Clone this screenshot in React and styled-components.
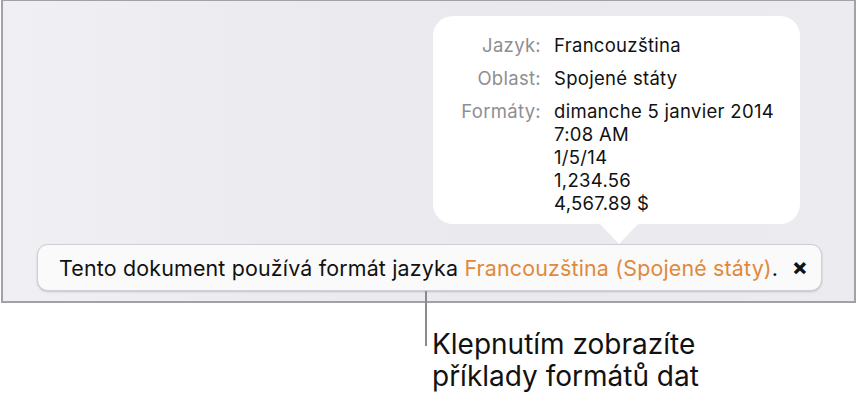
import styled, { createGlobalStyle } from 'styled-components';

const Global = createGlobalStyle`
    body {
        margin: 0;
        background: #ffffff;
        font-family: Inter, "Noto Sans", sans-serif;
        color: #1c1c1e;
    }
`;

const Frame = styled.div`
    margin-left: 1px;
    width: 851px;
    height: 300px;
    border: 2px solid #a2a2a6;
    border-top-width: 1px;
    background: linear-gradient(90deg, #f0f0f4 0%, #ebebf0 30%, #e9e9ee 60%, #ececf0 100%);
    display: flex;
    flex-direction: column;
`;

const Popover = styled.div`
    position: relative;
    margin: 15px 0 0 430px;
    width: 367px;
    height: 208px;
    box-sizing: border-box;
    background: #ffffff;
    border-radius: 20px;
    padding: 18px 0 0 0;
    display: grid;
    grid-template-columns: 108px 1fr;
    column-gap: 13px;
    row-gap: 10px;
    align-content: start;
    font-size: 18.5px;
    line-height: 23px;
    letter-spacing: 0.3px;

    &::after {
        content: '';
        position: absolute;
        left: 166px;
        bottom: -20px;
        border-left: 20px solid transparent;
        border-right: 20px solid transparent;
        border-top: 21px solid #ffffff;
    }
`;

const Label = styled.div`
    text-align: right;
    color: #8e8e93;
`;

const Value = styled.div`
    color: #111;
`;

const Banner = styled.div`
    margin: 20px 0 0 34px;
    width: 785px;
    height: 47px;
    box-sizing: border-box;
    background: #fafafa;
    border: 1px solid #d0d0d4;
    border-radius: 11px;
    box-shadow: 0 1px 2px rgba(0, 0, 0, 0.18);
    display: flex;
    align-items: center;
    justify-content: space-between;
    padding: 0 13px 0 21px;
    font-size: 21.4px;
    letter-spacing: 0.18px;
    color: #111;
`;

const Accent = styled.span`
    color: #e0893a;
`;

const Close = styled.span`
    font-size: 23px;
    font-weight: 800;
    line-height: 1;
`;

const Callout = styled.div`
    position: relative;
    margin-left: 432px;
    padding-top: 25px;
    font-size: 28px;
    line-height: 32px;
    color: #111;

    &::before {
        content: '';
        position: absolute;
        left: -7px;
        top: -12px;
        width: 2px;
        height: 55px;
        background: #8a8a8a;
    }
`;

const rows = [
    ['Jazyk:', ['Francouzština']],
    ['Oblast:', ['Spojené státy']],
    ['Formáty:', ['dimanche 5 janvier 2014', '7:08 AM', '1/5/14', '1,234.56', '4,567.89 $']],
];

export default function App() {
    return (
        <>
            <Global />
            <Frame>
                <Popover>
                    {rows.map(([label, values]) => (
                        <>
                            <Label key={label}>{label}</Label>
                            <Value>
                                {values.map((v) => (
                                    <div key={v}>{v}</div>
                                ))}
                            </Value>
                        </>
                    ))}
                </Popover>
                <Banner>
                    <span>
                        Tento dokument používá formát jazyka <Accent>Francouzština (Spojené státy)</Accent>.
                    </span>
                    <Close>×</Close>
                </Banner>
            </Frame>
            <Callout>
                Klepnutím zobrazíte
                <br />
                příklady formátů dat
            </Callout>
        </>
    );
}
